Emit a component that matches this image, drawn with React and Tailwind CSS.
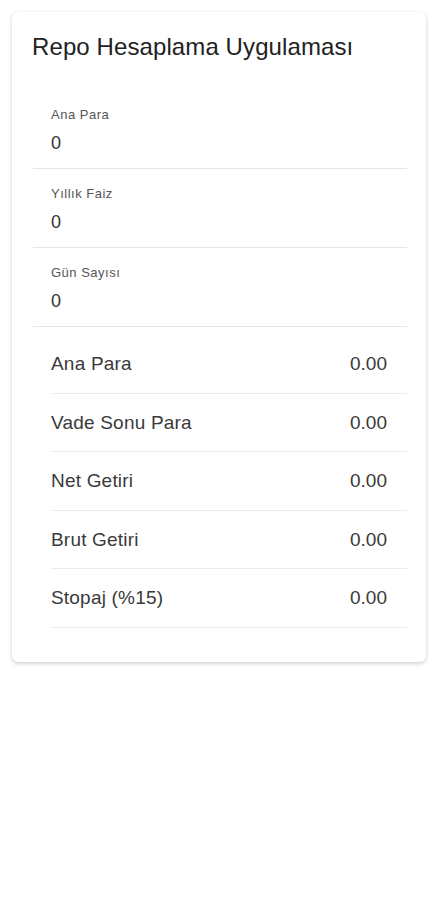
const inputs = [
  { label: "Ana Para", value: "0" },
  { label: "Yıllık Faiz", value: "0" },
  { label: "Gün Sayısı", value: "0" },
];

const results = [
  { label: "Ana Para", value: "0.00" },
  { label: "Vade Sonu Para", value: "0.00" },
  { label: "Net Getiri", value: "0.00" },
  { label: "Brut Getiri", value: "0.00" },
  { label: "Stopaj (%15)", value: "0.00" },
];

export default function App() {
  return (
    <div
      className="min-h-[900px] bg-white pt-3"
      style={{ fontFamily: '"Liberation Sans", Arial, sans-serif' }}
    >
      <div className="ml-3 w-[414px] rounded-md bg-white pl-[21px] pr-[19px] pt-[19px] pb-[34px] shadow-[0_2px_4px_rgba(0,0,0,0.16),0_0_2px_rgba(0,0,0,0.08)]">
        <h1 className="-ml-px text-[24px] leading-8 tracking-[0.1px] text-[#222]">
          Repo Hesaplama Uygulaması
        </h1>

        <div className="mt-[27px]">
          {inputs.map((item) => (
            <div
              key={item.label}
              className="border-b border-[#e6e6e6] pl-[18px] pt-[17px] pb-[13px]"
            >
              <div className="text-[13px] leading-4 tracking-[0.5px] text-[#555]">
                {item.label}
              </div>
              <div className="mt-2 text-[18px] leading-6 text-[#333]">
                {item.value}
              </div>
            </div>
          ))}
        </div>

        <div className="mt-2 ml-[18px]">
          {results.map((row) => (
            <div
              key={row.label}
              className="flex h-[58.5px] items-center justify-between border-b border-[#ececec] pt-px pr-5"
            >
              <span className="text-[19px] leading-6 tracking-[0.2px] text-[#3a3a3a]">
                {row.label}
              </span>
              <span className="text-[19px] leading-6 text-[#3a3a3a]">
                {row.value}
              </span>
            </div>
          ))}
        </div>
      </div>
    </div>
  );
}
